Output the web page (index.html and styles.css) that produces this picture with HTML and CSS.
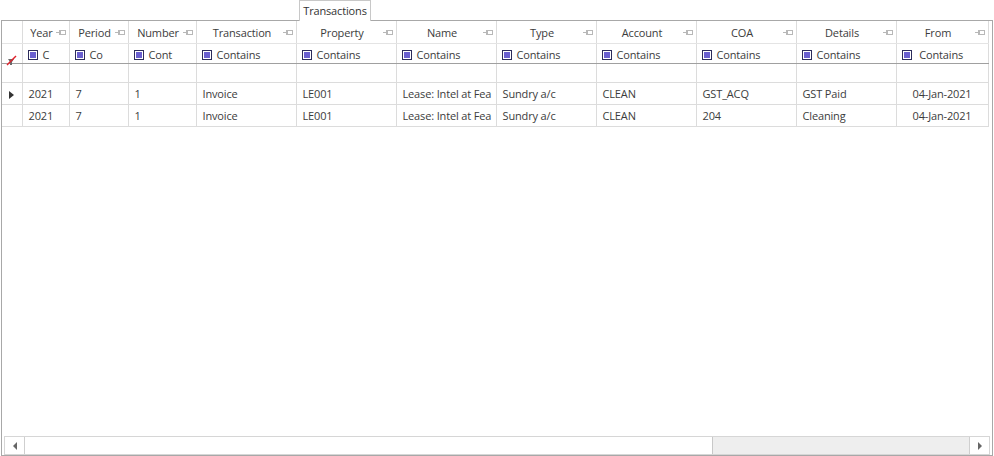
FILE: index.html
```html
<!DOCTYPE html>
<html>
<head>
  <title>Transactions</title>
  <link rel="stylesheet" href="styles.css">
</head>
<body>
  <div class="tab-strip">
    <div class="tab">Transactions</div>
  </div>

  <div class="grid">
    <div class="grid-body">
      <table class="data">
        <colgroup>
          <col class="c-ind"><col class="c-year"><col class="c-period"><col class="c-number">
          <col class="c-wide"><col class="c-wide"><col class="c-wide"><col class="c-wide">
          <col class="c-wide"><col class="c-wide"><col class="c-wide"><col class="c-from">
        </colgroup>
        <tr class="head-row">
          <th class="indicator"></th>
          <th><span class="caption">Year</span><span class="pin"></span></th>
          <th><span class="caption">Period</span><span class="pin"></span></th>
          <th><span class="caption">Number</span><span class="pin"></span></th>
          <th><span class="caption">Transaction</span><span class="pin"></span></th>
          <th><span class="caption">Property</span><span class="pin"></span></th>
          <th><span class="caption">Name</span><span class="pin"></span></th>
          <th><span class="caption">Type</span><span class="pin"></span></th>
          <th><span class="caption">Account</span><span class="pin"></span></th>
          <th><span class="caption">COA</span><span class="pin"></span></th>
          <th><span class="caption">Details</span><span class="pin"></span></th>
          <th><span class="caption">From</span><span class="pin"></span></th>
        </tr>
        <tr class="filter-row">
          <td class="indicator">
            <svg class="clear-filter" width="12" height="12" viewBox="0 0 12 12">
              <path d="M2 5 L8 5 L6 8 L6 11 L4 11 L4 8 Z" fill="#6b6b6b"/>
              <path d="M1 11 L10 2" stroke="#e0202a" stroke-width="1.4"/>
            </svg>
          </td>
          <td><span class="op"></span>C</td>
          <td><span class="op"></span>Co</td>
          <td><span class="op"></span>Cont</td>
          <td><span class="op"></span>Contains</td>
          <td><span class="op"></span>Contains</td>
          <td><span class="op"></span>Contains</td>
          <td><span class="op"></span>Contains</td>
          <td><span class="op"></span>Contains</td>
          <td><span class="op"></span>Contains</td>
          <td><span class="op"></span>Contains</td>
          <td><span class="op"></span> Contains</td>
        </tr>
        <tr class="entry-row">
          <td class="indicator"></td>
          <td></td><td></td><td></td><td></td><td></td><td></td>
          <td></td><td></td><td></td><td></td><td></td>
        </tr>
        <tr class="row">
          <td class="indicator"><span class="current"></span></td>
          <td>2021</td><td>7</td><td>1</td><td>Invoice</td><td>LE001</td>
          <td>Lease: Intel at Fea</td><td>Sundry a/c</td><td>CLEAN</td><td>GST_ACQ</td>
          <td>GST Paid</td><td class="center">04-Jan-2021</td>
        </tr>
        <tr class="row">
          <td class="indicator"></td>
          <td>2021</td><td>7</td><td>1</td><td>Invoice</td><td>LE001</td>
          <td>Lease: Intel at Fea</td><td>Sundry a/c</td><td>CLEAN</td><td>204</td>
          <td>Cleaning</td><td class="center">04-Jan-2021</td>
        </tr>
      </table>
    </div>

    <div class="hscroll">
      <div class="sb-btn"><span class="arrow-left"></span></div>
      <div class="sb-track">
        <div class="sb-thumb"></div>
      </div>
      <div class="sb-btn"><span class="arrow-right"></span></div>
    </div>
  </div>
</body>
</html>
```

FILE: styles.css
```css
html, body {
  margin: 0;
  padding: 0;
  background: #fff;
}
body {
  width: 994px;
  height: 456px;
  overflow: hidden;
  font-family: "Open Sans", "Noto Sans", sans-serif;
  font-size: 11px;
  letter-spacing: -0.15px;
  color: #3c3c3c;
}

/* Tab header */
.tab-strip {
  height: 20px;
  position: relative;
}
.tab {
  position: absolute;
  left: 299px;
  top: 0;
  width: 70px;
  height: 20px;
  line-height: 19px;
  text-align: center;
  border: 1px solid #c8c8c8;
  border-bottom: none;
  background: #fff;
  z-index: 2;
  color: #333;
}

/* Grid frame */
.grid {
  margin-left: 1px;
  width: 990px;
  height: 434px;
  border: 1px solid #a8a8a8;
  display: flex;
  flex-direction: column;
}
.grid-body {
  flex: 1;
  overflow: hidden;
}
.data {
  border-collapse: collapse;
  table-layout: fixed;
  width: 986px;
}
.c-ind { width: 20px; }
.c-year { width: 47px; }
.c-period { width: 59px; }
.c-number { width: 68px; }
.c-wide { width: 100px; }
.c-from { width: 92px; }

.data th, .data td {
  border-right: 1px solid #dcdcdc;
  white-space: nowrap;
  overflow: hidden;
  padding: 0 0 0 6px;
  text-align: left;
  font-weight: normal;
}
.data .indicator {
  padding: 0;
  text-align: center;
}
.data .center {
  text-align: center;
  padding-left: 0;
}

/* Column captions */
.head-row th {
  height: 22px;
  border-bottom: 1px solid #e4e4e4;
  text-align: center;
  position: relative;
  padding: 0;
}
.head-row th .caption {
  display: inline-block;
  padding-right: 8px;
}
.pin {
  position: absolute;
  right: 4px;
  top: 9px;
  width: 9px;
  height: 5px;
}
.pin::before {
  content: "";
  position: absolute;
  left: 0;
  top: 2px;
  width: 3px;
  height: 1px;
  background: #b8b8b8;
}
.pin::after {
  content: "";
  position: absolute;
  left: 3px;
  top: 0;
  width: 4px;
  height: 3px;
  border: 1px solid #b8b8b8;
  border-left-width: 2px;
}

/* Auto filter row */
.filter-row td {
  height: 18px;
  border-bottom: 1px solid #a0a0a0;
  padding: 1px 0 0 5px;
}
.filter-row td.indicator {
  padding: 0;
  height: 19px;
  overflow: visible;
  vertical-align: bottom;
}
.op {
  display: inline-block;
  width: 8px;
  height: 8px;
  border: 1px solid #2c2c5c;
  vertical-align: -1px;
  margin-right: 5px;
  background: #fff;
  position: relative;
}
.op::after {
  content: "";
  position: absolute;
  left: 1px;
  top: 1px;
  width: 6px;
  height: 6px;
  background: #6a5fd0;
}
.clear-filter {
  display: block;
  margin: 0 0 -3px 4px;
}

/* New item row */
.entry-row td {
  height: 18px;
  border-bottom: 1px solid #dcdcdc;
}

/* Data rows */
.row td {
  height: 21px;
  border-bottom: 1px solid #dcdcdc;
}
.current {
  display: inline-block;
  width: 0;
  height: 0;
  border-top: 4px solid transparent;
  border-bottom: 4px solid transparent;
  border-left: 5px solid #333;
  vertical-align: middle;
}

/* Horizontal scroll bar */
.hscroll {
  height: 17px;
  display: flex;
  margin: 0 2px 0 2px;
  border: 1px solid #d6d6d6;
  background: #f0f0f0;
}
.sb-btn {
  width: 19px;
  display: flex;
  align-items: center;
  justify-content: center;
  background: #fff;
  border-right: 1px solid #cfcfcf;
}
.sb-btn:last-child {
  border-right: none;
  border-left: 1px solid #cfcfcf;
}
.sb-track {
  flex: 1;
  background: #eeeeee;
}
.sb-thumb {
  width: 688px;
  height: 100%;
  box-sizing: border-box;
  background: #fff;
  border-right: 1px solid #c8c8c8;
}
.arrow-left, .arrow-right {
  width: 0;
  height: 0;
  border-top: 4px solid transparent;
  border-bottom: 4px solid transparent;
}
.arrow-left {
  border-right: 4px solid #666;
}
.arrow-right {
  border-left: 4px solid #666;
}
```
